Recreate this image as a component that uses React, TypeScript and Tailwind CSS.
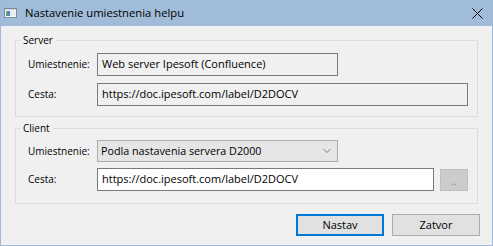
import { ChevronDown } from "lucide-react";

function Field({ value, className }: { value: string; className: string }) {
  return (
    <div className={`h-[23px] flex items-center pl-[4px] border border-[#7a7a7a] text-black text-[11px] ${className}`}>
      {value}
    </div>
  );
}

export default function App() {
  return (
    <div className="w-[493px] h-[246px] flex flex-col bg-[#f0f0f0] border-x border-b border-[#9fbad8] font-['Open_Sans',sans-serif] text-[10px] text-black">
      <div className="h-[26px] shrink-0 flex items-center bg-[#a0bcd9] pl-[3px] pr-[9px]">
        <svg width="13" height="10" viewBox="0 0 13 10" className="shrink-0">
          <rect x="0.5" y="0.5" width="12" height="9" fill="#f4f7fa" stroke="#7f8b98" />
          <rect x="1" y="1" width="11" height="1" fill="#c9d3de" />
          <rect x="2" y="3" width="2" height="5" fill="#5aa469" />
          <rect x="4" y="3" width="2" height="5" fill="#4d86c4" />
          <rect x="6" y="3" width="5" height="5" fill="#e6ebf1" />
        </svg>
        <span className="ml-[8px] text-[11.25px] leading-none">Nastavenie umiestnenia helpu</span>
        <svg width="11" height="11" viewBox="0 0 11 11" className="ml-auto">
          <path d="M0.5 0.5 L10.5 10.5 M10.5 0.5 L0.5 10.5" stroke="#000" strokeWidth="1" />
        </svg>
      </div>

      <div className="flex flex-col px-[14px]">
        <fieldset className="mt-[6px] border border-[#dcdcdc] pb-[10px]">
          <legend className="ml-[4px] px-[3px] leading-[16px]">Server</legend>
          <div className="pl-[12px] pr-[9px]">
            <div className="mt-[5px] flex items-center">
              <span className="w-[69px] shrink-0">Umiestnenie:</span>
              <Field value="Web server Ipesoft (Confluence)" className="w-[241px]" />
            </div>
            <div className="mt-[7px] flex items-center">
              <span className="w-[69px] shrink-0">Cesta:</span>
              <Field value="https://doc.ipesoft.com/label/D2DOCV" className="flex-1" />
            </div>
          </div>
        </fieldset>

        <fieldset className="mt-[3px] border border-[#dcdcdc] pb-[12px]">
          <legend className="ml-[4px] px-[3px] leading-[16px]">Client</legend>
          <div className="pl-[12px] pr-[9px]">
            <div className="mt-[4px] flex items-center">
              <span className="w-[69px] shrink-0">Umiestnenie:</span>
              <div className="w-[241px] h-[22px] flex items-center pl-[3px] pr-[4px] bg-[#e5e5e5] border border-[#acacac] text-[10.75px]">
                <span className="flex-1">Podla nastavenia servera D2000</span>
                <ChevronDown size={12} strokeWidth={1.25} className="text-[#333]" />
              </div>
            </div>
            <div className="mt-[6px] flex items-center">
              <span className="w-[69px] shrink-0">Cesta:</span>
              <Field value="https://doc.ipesoft.com/label/D2DOCV" className="flex-1 bg-white" />
              <div className="ml-[6px] w-[28px] h-[22px] flex items-end justify-center pb-[4px] bg-[#cccccc] border border-[#bfbfbf] text-[#8a8a8a] leading-none">
                ..
              </div>
            </div>
          </div>
        </fieldset>
      </div>

      <div className="mt-[10px] flex justify-end gap-[8px] pr-[12px]">
        <button className="w-[88px] h-[22px] bg-[#e1e1e1] border-2 border-[#0078d7] text-[11px]">Nastav</button>
        <button className="w-[88px] h-[22px] bg-[#e1e1e1] border border-[#adadad] text-[11px]">Zatvor</button>
      </div>
    </div>
  );
}
